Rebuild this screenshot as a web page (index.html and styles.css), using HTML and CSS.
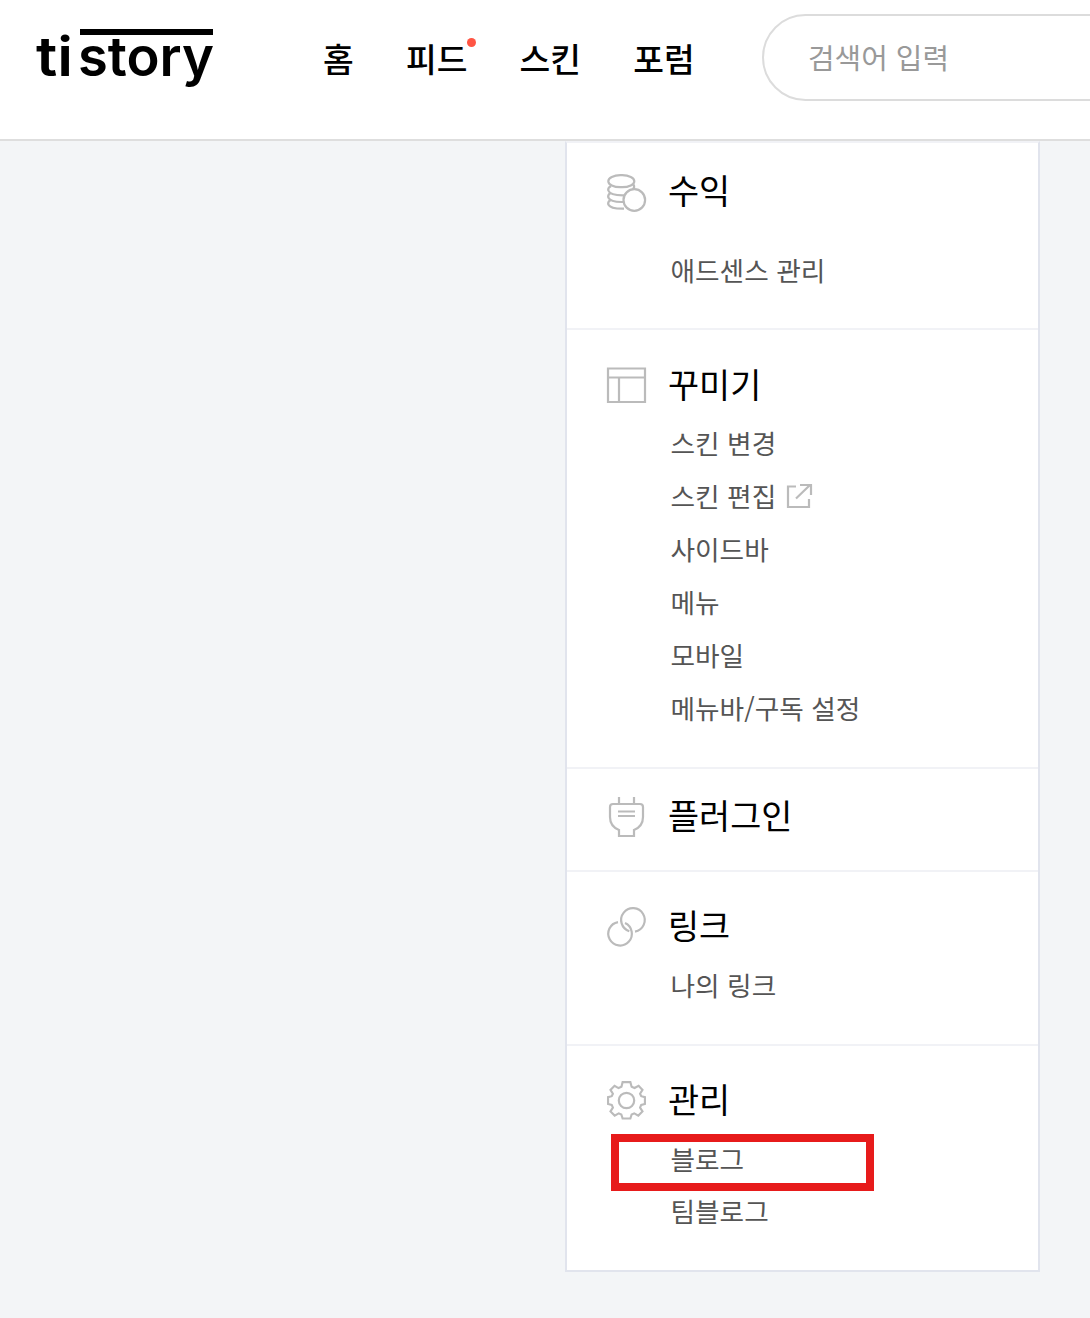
FILE: index.html
```html
<!DOCTYPE html>
<html lang="ko">
<head>
<meta charset="utf-8">
<title>TISTORY</title>
<link rel="stylesheet" href="styles.css">
</head>
<body>
<header class="header">
  <a class="logo" aria-label="tistory">
    <svg width="190" height="86" viewBox="0 0 190 86">
      <rect x="44" y="13" width="133" height="6"/>
      <text class="logo-text" x="0" y="60" textLength="37" lengthAdjust="spacingAndGlyphs">ti</text>
      <text class="logo-text" x="42" y="60" textLength="136" lengthAdjust="spacingAndGlyphs">story</text>
    </svg>
  </a>
  <nav class="nav">
    <a>홈</a>
    <a class="has-new">피드</a>
    <a>스킨</a>
    <a>포럼</a>
  </nav>
  <div class="search">검색어 입력</div>
</header>
<main class="panel">
  <section class="group revenue">
    <h2><svg class="icon" width="40" height="40" viewBox="0 0 40 40"><rect x="2.300" y="5.200" width="26" height="12" rx="12" ry="6"/><path d="M5 16Q1.500 18 2.300 20.500 4 25.500 18 25.300M4.500 23Q1.500 25 2.300 27.500 4.500 32.300 17 32M4.500 30Q1.500 32 2.300 34.500 4.500 39 18 38.700M27.500 14.500q1.500 2.500-.5 5"/><circle cx="28.300" cy="30" r="10.800" class="cover"/></svg>수익</h2>
    <ul><li>애드센스 관리</li></ul>
  </section>
  <section class="group design">
    <h2><svg class="icon" width="40" height="40" viewBox="0 0 40 40"><path d="M2 4.500h37V38H2zM2 13.500h37M13 13.500V38"/></svg>꾸미기</h2>
    <ul>
      <li>스킨 변경</li>
      <li>스킨 편집<svg class="external" width="26" height="26" viewBox="0 0 26 26"><path d="M10 3.500H2V24h21v-8M10 15.500L24 2M14 2h11v10"/></svg></li>
      <li>사이드바</li>
      <li>메뉴</li>
      <li>모바일</li>
      <li>메뉴바/구독 설정</li>
    </ul>
  </section>
  <section class="group plugin">
    <h2><svg class="icon" width="40" height="40" viewBox="0 0 40 40"><path d="M13 2v7M28 2v7M4 12q0-3 3-3h27q3 0 3 3v10c0 7-4 11-9 13v6H13v-6c-5-2-9-6-9-13zM12 16.500h17M12 21h17"/></svg>플러그인</h2>
  </section>
  <section class="group links">
    <h2><svg class="icon" width="40" height="40" viewBox="0 0 40 40"><path d="M12 17.100A11.800 11.800 0 1 0 19 18M23.300 26.200A11.800 11.800 0 1 1 29 26.600"/></svg>링크</h2>
    <ul><li>나의 링크</li></ul>
  </section>
  <section class="group manage">
    <h2><svg class="icon" width="40" height="40" viewBox="0 0 40 40"><path transform="translate(.6 1.200) scale(.97)" d="M16.500 2h8l1.300 4.800 3 1.300L33 5.800 37 10l-2.500 4 1.200 2.500 3.800 1v7l-3.800 1-1.200 2.800L37 32.200 32.700 36.500l-4.200-2.300-2.700 1.200-1.300 4.100h-8l-1.300-4.100-2.700-1.200-4.200 2.300L4 32.200l2.500-3.900-1.200-2.800-3.800-1v-7l3.800-1L6.500 14 4 10l4.200-4.200 4.100 2.300 3-1.300z"/><circle cx="20.500" cy="21.500" r="7.700"/></svg>관리</h2>
    <ul>
      <li class="marked">블로그</li>
      <li>팀블로그</li>
    </ul>
  </section>
</main>
</body>
</html>
```
FILE: styles.css
```css
*, *::before, *::after { box-sizing: border-box; }
body {
  margin: 0;
  min-height: 1318px;
  background: #f3f5f7;
  font-family: "Noto Sans CJK KR", sans-serif;
  color: #000;
  overflow-x: hidden;
}
.header {
  display: flex;
  align-items: flex-start;
  height: 141px;
  padding-left: 36px;
  background: #fff;
  border-bottom: 2px solid #dedede;
  overflow: hidden;
}
.logo { flex: none; width: 287px; padding-top: 16px; line-height: 0; }
.logo svg { overflow: visible; }
.logo-text { font: 600 54px Inter, sans-serif; }
.nav {
  display: flex;
  flex: none;
  gap: 52.200px;
  width: 439px;
  padding-top: 33px;
  font-size: 33.400px;
  font-weight: 500;
  line-height: 50px;
  white-space: nowrap;
}
.has-new { position: relative; }
.has-new::after {
  content: "";
  position: absolute;
  top: 5px;
  right: -9px;
  width: 9px;
  height: 9px;
  border-radius: 50%;
  background: #ff5544;
}
.search {
  flex: none;
  width: 500px;
  height: 87px;
  margin-top: 14px;
  padding-left: 44px;
  border: 2px solid #dcdcdc;
  border-radius: 44px;
  font-size: 28.900px;
  line-height: 80px;
  color: #999;
}
.panel {
  width: 475px;
  height: 1131px;
  margin-left: 565px;
  background: #fff;
  border: 2px solid #e1e4ed;
  border-top-color: #f1f2f6;
}
.group { padding-left: 39px; border-bottom: 2px solid #f1f2f6; }
.group:last-child { border-bottom: 0; }
.revenue { height: 187px; padding-top: 22px; }
.design { height: 439px; padding-top: 29px; }
.plugin { height: 103px; padding-top: 21px; }
.links { height: 174px; padding-top: 28px; }
.manage { padding-top: 28px; }
h2 {
  display: flex;
  align-items: center;
  gap: 22px;
  height: 50px;
  margin: 0;
  font-size: 33.800px;
  font-weight: 400;
  line-height: 50px;
}
ul { margin: 0; padding: 8px 0 0 64.500px; list-style: none; }
.revenue ul { padding-top: 28px; }
.design ul { padding-top: 7px; }
li {
  display: flex;
  align-items: center;
  height: 53px;
  font-size: 26.700px;
  line-height: 53px;
  color: #555;
}
.icon, .external { flex: none; fill: none; stroke: #bbb; stroke-width: 2.200; overflow: visible; }
.external { margin-left: 10px; }
.icon .cover { fill: #fff; }
.marked { position: relative; height: 52px; }
.marked::before {
  content: "";
  position: absolute;
  top: 2px;
  left: -59.500px;
  width: 263px;
  height: 57px;
  border: 8px solid #e71b1b;
}
```
